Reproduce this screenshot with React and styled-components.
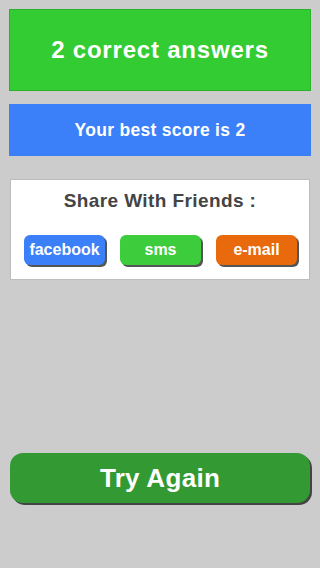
import React from "react";
import styled, { createGlobalStyle } from "styled-components";

const Global = createGlobalStyle`
  html, body { margin: 0; padding: 0; background: #cccccc; }
  body { font-family: "Liberation Sans", Arial, sans-serif; }
`;

const Page = styled.div`
  width: 320px;
  height: 568px;
  box-sizing: border-box;
  padding: 9px 9px 0 9px;
  display: flex;
  flex-direction: column;
  background: #cccccc;
`;

const Banner = styled.div`
  box-sizing: border-box;
  height: ${(p) => p.$h}px;
  margin-bottom: ${(p) => p.$mb}px;
  background: ${(p) => p.$bg};
  border: 1px solid ${(p) => p.$border};
  display: flex;
  align-items: center;
  justify-content: center;
  color: #fff;
  font-weight: bold;
  font-size: ${(p) => p.$fs}px;
  letter-spacing: ${(p) => p.$ls}px;
`;

const ShareCard = styled.div`
  box-sizing: border-box;
  margin: 0 1px;
  height: 101px;
  background: #fff;
  border: 1px solid #bdbdbd;
  display: flex;
  flex-direction: column;
  align-items: center;
  padding-top: 10px;
`;

const ShareTitle = styled.div`
  color: #444;
  font-size: 19px;
  font-weight: bold;
  letter-spacing: 0.4px;
`;

const ButtonRow = styled.div`
  margin-top: 23px;
  width: 100%;
  box-sizing: border-box;
  padding: 0 12px 0 13px;
  display: flex;
  justify-content: space-between;
`;

const ShareButton = styled.div`
  width: 81px;
  height: 30px;
  border-radius: 6px;
  background: ${(p) => p.$bg};
  box-shadow: 2px 2px 0 #555;
  display: flex;
  align-items: center;
  justify-content: center;
  color: #fff;
  font-weight: bold;
  font-size: 16px;
`;

const Spacer = styled.div`
  flex: 1;
`;

const TryAgain = styled.div`
  box-sizing: border-box;
  margin: 0 1px 65px 1px;
  height: 50px;
  border-radius: 13px;
  background: #339933;
  box-shadow: 2px 2px 0 #444;
  display: flex;
  align-items: center;
  justify-content: center;
  color: #fff;
  font-weight: bold;
  font-size: 26px;
  letter-spacing: 0.3px;
`;

export default function App() {
  return (
    <>
      <Global />
      <Page>
        <Banner $h={82} $mb={13} $bg="#33cc33" $border="#2bb12b" $fs={24} $ls={0.8}>
          2 correct answers
        </Banner>
        <Banner $h={52} $mb={23} $bg="#3b80f8" $border="#3b80f8" $fs={17.5} $ls={0.3}>
          Your best score is 2
        </Banner>
        <ShareCard>
          <ShareTitle>Share With Friends :</ShareTitle>
          <ButtonRow>
            <ShareButton $bg="#3b80f8">facebook</ShareButton>
            <ShareButton $bg="#3ccc3c">sms</ShareButton>
            <ShareButton $bg="#e86a0c">e-mail</ShareButton>
          </ButtonRow>
        </ShareCard>
        <Spacer />
        <TryAgain>Try Again</TryAgain>
      </Page>
    </>
  );
}
